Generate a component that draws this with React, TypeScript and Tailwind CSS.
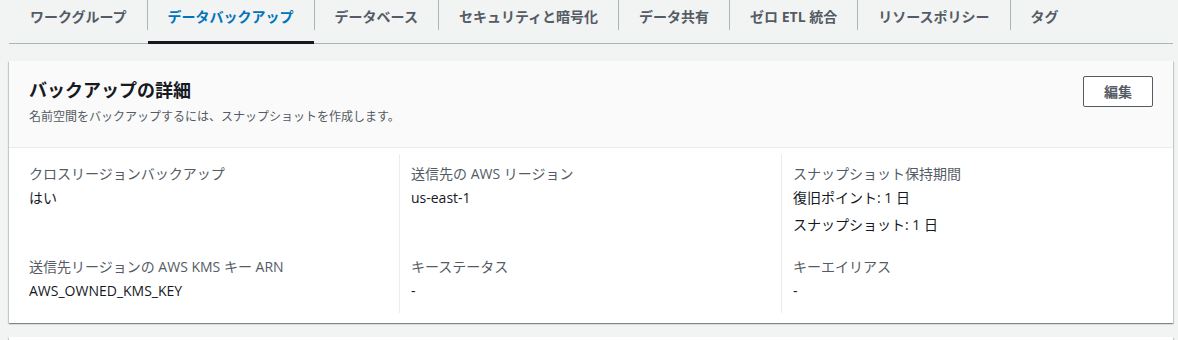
import React from "react";

const tabs = [
  "ワークグループ",
  "データバックアップ",
  "データベース",
  "セキュリティと暗号化",
  "データ共有",
  "ゼロ ETL 統合",
  "リソースポリシー",
  "タグ",
];

type Cell = { label: string; values: string[] };

const rows: Cell[][] = [
  [
    { label: "クロスリージョンバックアップ", values: ["はい"] },
    { label: "送信先の AWS リージョン", values: ["us-east-1"] },
    { label: "スナップショット保持期間", values: ["復旧ポイント: 1 日", "スナップショット: 1 日"] },
  ],
  [
    { label: "送信先リージョンの AWS KMS キー ARN", values: ["AWS_OWNED_KMS_KEY"] },
    { label: "キーステータス", values: ["-"] },
    { label: "キーエイリアス", values: ["-"] },
  ],
];

export default function App() {
  return (
    <div
      className="h-[340px] w-full overflow-hidden bg-[#f2f3f3] pl-[9px] pr-[5px] text-[#16191f]"
      style={{ fontFamily: '"Open Sans", "Noto Sans CJK JP", sans-serif' }}
    >
      {/* tabs */}
      <div className="flex h-[44px] items-start border-b border-[#aab7b8] pl-px">
        {tabs.map((t, i) => {
          const active = i === 1;
          return (
            <div key={t} className="relative h-[43px]">
              <div
                className={`flex h-[30px] items-center px-[20px] text-[14px] font-bold ${
                  i === 0 ? "" : "border-l border-[#aab7b8]"
                } ${active ? "text-[#0073bb]" : "text-[#545b64]"}`}
              >
                <span className="whitespace-nowrap pt-[2px]">{t}</span>
              </div>
              {active && (
                <div className="absolute bottom-[-1px] left-px right-0 h-[3px] bg-[#16191f]" />
              )}
            </div>
          );
        })}
      </div>

      {/* card */}
      <div className="mt-[17px] bg-white shadow-[0_1px_1px_0_rgba(0,28,36,0.3),1px_1px_1px_0_rgba(0,28,36,0.15),-1px_1px_1px_0_rgba(0,28,36,0.15)]">
        <div className="flex items-start justify-between border-b border-[#eaeded] bg-[#fafafa] px-[20px] pb-[22px] pt-[15px]">
          <div className="pt-[3px]">
            <h2 className="text-[18px] font-bold leading-[22px] text-[#16191f]">バックアップの詳細</h2>
            <p className="mt-[8px] text-[12px] leading-[16px] text-[#545b64]">
              名前空間をバックアップするには、スナップショットを作成します。
            </p>
          </div>
          <button className="h-[31px] w-[70px] rounded-[2px] border border-[#545b64] bg-white text-[14px] font-bold text-[#545b64]">
            編集
          </button>
        </div>

        <div className="grid grid-cols-[370px_382px_1fr] px-[20px] pb-[10px] pt-[6px] text-[14px] leading-[22px]">
          {rows.map((row, r) =>
            row.map((cell, c) => (
              <div
                key={`${r}-${c}`}
                className={`pb-[11px] pt-[9px] ${c > 0 ? "border-l border-[#eaeded] pl-[11px]" : ""}`}
              >
                <div className="text-[#545b64]">{cell.label}</div>
                {cell.values.map((v, k) => (
                  <div key={v} className={k === 0 ? "mt-[2px]" : "mt-[5px]"}>
                    {v}
                  </div>
                ))}
              </div>
            ))
          )}
        </div>
      </div>

      <div className="mt-[14px] h-[40px] bg-white shadow-[0_1px_1px_0_rgba(0,28,36,0.3),1px_1px_1px_0_rgba(0,28,36,0.15),-1px_1px_1px_0_rgba(0,28,36,0.15)]" />
    </div>
  );
}
